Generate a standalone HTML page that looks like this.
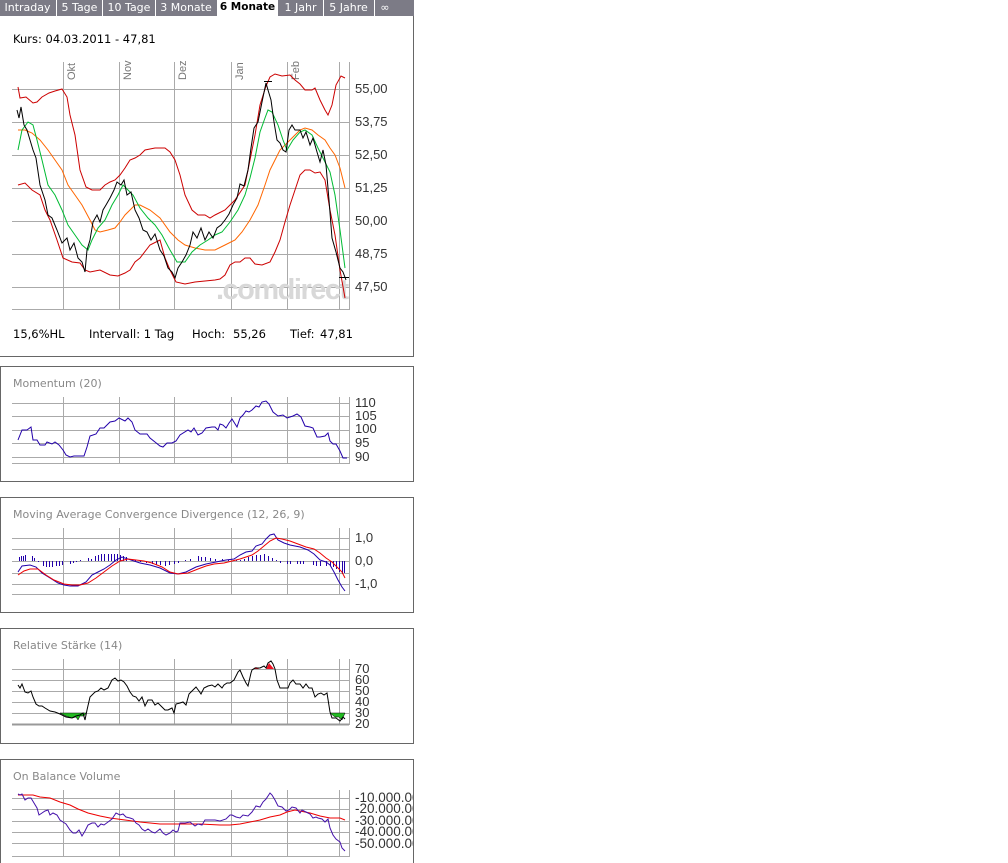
<!DOCTYPE html>
<html><head><meta charset="utf-8"><style>
body{margin:0;background:#fff;width:1008px;height:863px;overflow:hidden;font-family:"DejaVu Sans","Liberation Sans",sans-serif}
.tabs{position:absolute;left:0;top:0;width:414px;height:16px;background:#7c7b86}
.tab{position:absolute;top:0;height:15px;line-height:15px;font-size:11px;color:#fff;text-align:center;white-space:nowrap;overflow:hidden}
.sep{position:absolute;top:0;width:1px;height:16px;background:#fff}
.act{background:#fff;color:#000;font-weight:bold;height:17px;font-size:10.5px}
svg{position:absolute;left:0;top:0}
</style></head><body>
<div class="tabs">
<div class="tab" style="left:0;width:55px">Intraday</div><div class="sep" style="left:56px"></div>
<div class="tab" style="left:57px;width:45px">5 Tage</div><div class="sep" style="left:102px"></div>
<div class="tab" style="left:103px;width:52px">10 Tage</div><div class="sep" style="left:155px"></div>
<div class="tab" style="left:156px;width:60px">3 Monate</div>
<div class="tab act" style="left:217px;width:61px">6 Monate</div>
<div class="tab" style="left:279px;width:43px">1 Jahr</div><div class="sep" style="left:323px"></div>
<div class="tab" style="left:324px;width:49px">5 Jahre</div><div class="sep" style="left:374px"></div>
<div class="tab" style="left:375px;width:20px">∞</div>
</div>
<svg width="1008" height="863" font-family="Liberation Sans, sans-serif">
<defs><clipPath id="c"><rect x="0" y="0" width="413" height="863"/></clipPath></defs>
<g fill="none" stroke="#666" stroke-width="1">
<path d="M413.5 16V356.5H0"/>
<rect x="0.5" y="366.5" width="413" height="115"/>
<rect x="0.5" y="497.5" width="413" height="115"/>
<rect x="0.5" y="628.5" width="413" height="115"/>
<rect x="0.5" y="759.5" width="413" height="110"/>
</g>
<text x="13" y="43" font-size="11.5" font-family="DejaVu Sans,sans-serif" fill="#000">Kurs: 04.03.2011 - 47,81</text>
<g stroke="#aaa" stroke-width="1">
<path d="M12 89.5H349M12 122.5H349M12 155.5H349M12 188.5H349M12 221.5H349M12 254.5H349M12 287.5H349M12 309.5H349"/>
<path d="M63.5 62V310M119.5 62V310M174.5 62V310M231.5 62V310M287.5 62V310M339.5 62V310M349.5 62V310"/>
</g>
<g font-size="11" fill="#777" font-family="Liberation Sans,sans-serif">
<text transform="translate(75,80) rotate(-90)">Okt</text>
<text transform="translate(131,80) rotate(-90)">Nov</text>
<text transform="translate(186,80) rotate(-90)">Dez</text>
<text transform="translate(243,80) rotate(-90)">Jan</text>
<text transform="translate(299,80) rotate(-90)">Feb</text>
</g>
<text x="216" y="299" font-size="29" font-weight="bold" fill="#d8d8d8" font-family="Liberation Sans,sans-serif" letter-spacing="-1.5">.comdirect</text>
<g font-size="13" fill="#333">
<text x="355" y="93">55,00</text><text x="355" y="126">53,75</text><text x="355" y="159">52,50</text><text x="355" y="192">51,25</text><text x="355" y="225">50,00</text><text x="355" y="258">48,75</text><text x="355" y="291">47,50</text>
</g>
<g fill="none" stroke-width="1">
<polyline stroke="#cc0000" points="18,87 20,98 26,97 33,103 37,102 42,97 49,93 55,91 62,89 67,97 70,115 75,135 80,170 86,187 92,190 100,190 105,185 110,182 115,180 120,175 125,168 130,160 135,158 140,155 145,150 155,148 165,148 170,152 175,160 180,175 185,195 192,210 198,215 205,215 210,218 215,215 225,210 235,200 245,185 250,160 255,135 260,105 266,86 270,77 275,74 282,76 290,75 295,80 300,84 305,90 312,90 315,88 320,100 325,110 328,115 332,105 336,85 341,76 345,78"/>
<polyline stroke="#cc0000" points="18,185 25,183 32,190 40,195 45,210 50,220 57,240 63,258 72,262 80,263 85,270 90,272 100,270 110,275 118,276 125,273 130,270 135,262 140,258 150,245 160,240 165,258 170,270 176,282 185,284 195,282 205,281 215,280 220,279 225,275 230,265 235,262 240,262 245,258 250,258 255,264 262,265 270,262 275,252 280,240 285,222 290,205 295,190 300,175 305,170 310,170 315,173 320,172 325,180 330,210 335,235 340,270 345,298"/>
<polyline stroke="#ff6600" points="18,130 25,130 32,133 40,140 48,150 55,160 62,170 68,185 75,195 82,205 90,220 95,230 100,232 108,230 115,228 120,222 125,215 130,210 135,205 140,205 150,210 160,218 170,232 178,240 185,245 195,248 205,250 215,250 225,245 235,240 242,232 250,220 258,205 265,185 270,170 275,160 280,150 287,143 295,135 300,130 305,128 312,130 318,135 325,140 330,148 335,155 340,168 345,188"/>
<polyline stroke="#00bb33" points="18,150 22,130 28,122 33,125 37,140 42,160 48,185 55,195 62,210 68,225 75,235 82,245 88,250 92,240 98,228 105,220 112,205 118,195 123,185 128,190 133,195 140,208 148,218 155,225 162,235 170,250 177,262 185,262 192,252 200,245 208,240 215,235 222,232 230,222 238,210 245,195 250,178 255,158 260,132 265,118 268,110 272,112 278,125 283,140 287,150 293,140 300,132 305,130 312,135 318,148 324,160 330,172 335,195 340,230 345,268"/>
<polyline stroke="#000" points="17,110 19,118 21,107 24,125 27,130 30,140 33,150 36,158 40,185 45,200 48,215 52,218 57,230 62,243 67,238 70,250 74,243 78,258 82,262 85,272 87,250 90,240 93,222 97,215 100,222 103,210 106,205 110,198 114,190 117,182 121,185 124,180 127,195 131,192 135,210 139,218 143,230 147,232 151,240 155,234 160,250 164,256 168,268 172,272 175,278 178,268 182,262 186,255 190,245 193,232 197,238 201,228 205,240 209,232 213,238 217,228 221,225 225,220 229,214 233,205 237,198 240,184 244,186 248,170 251,148 254,128 258,122 262,102 266,83 268,90 271,100 274,122 277,140 280,143 283,150 286,152 289,130 292,125 295,130 300,130 303,138 306,132 310,145 313,138 317,152 320,162 323,150 326,165 329,200 332,238 336,252 340,268 343,272 346,280"/>
<path stroke="#000" d="M264 81.5H272M339 277.5H349"/>
</g>
<g font-size="11.5" font-family="DejaVu Sans,sans-serif" fill="#000">
<text x="13" y="338">15,6%HL</text><text x="89" y="338">Intervall: 1 Tag</text><text x="192" y="338">Hoch:</text><text x="233" y="338">55,26</text><text x="290" y="338">Tief:</text><text x="320" y="338">47,81</text>
</g>
<text x="13" y="387" font-size="11" fill="#888" font-family="DejaVu Sans,sans-serif">Momentum (20)</text>
<g stroke="#aaa"><path d="M12 403.5H349M12 416.5H349M12 430.5H349M12 443.5H349M12 457.5H349M12 463.5H349"/><path d="M63.5 397V464M119.5 397V464M174.5 397V464M231.5 397V464M287.5 397V464M339.5 397V464M349.5 397V464"/></g>
<g font-size="13" fill="#333"><text x="355" y="407">110</text><text x="355" y="420">105</text><text x="355" y="433">100</text><text x="355" y="447">95</text><text x="355" y="461">90</text></g>
<polyline fill="none" stroke="#2200aa" points="18,440 22,430 27,430 31,427 33,440 37,440 40,445 45,445 47,442 52,444 55,442 59,445 63,450 66,455 70,457 74,456 79,456 84,456 87,447 90,436 96,434 100,428 104,428 110,422 115,421 119,418 125,421 128,418 132,422 135,430 140,434 147,434 150,438 155,442 160,446 163,447 167,443 172,443 176,441 180,435 188,430 191,432 194,428 198,435 202,433 206,428 212,427 215,427 218,430 220,424 223,425 226,428 229,423 232,419 237,427 240,418 243,415 246,411 249,412 252,410 256,406 259,407 262,402 266,401 269,404 273,412 278,416 283,415 287,418 290,417 293,416 297,414 301,417 305,426 310,427 313,428 317,437 320,437 325,436 328,433 330,441 333,444 336,444 340,451 343,458 347,458"/>
<text x="13" y="518" font-size="11" fill="#888" font-family="DejaVu Sans,sans-serif">Moving Average Convergence Divergence (12, 26, 9)</text>
<g stroke="#aaa"><path d="M12 538.5H349M12 549.5H349M12 561.5H349M12 573.5H349M12 584.5H349M12 594.5H349"/><path d="M63.5 528V595M119.5 528V595M174.5 528V595M231.5 528V595M287.5 528V595M339.5 528V595M349.5 528V595"/></g>
<g font-size="13" fill="#333"><text x="355" y="542">1,0</text><text x="355" y="565">0,0</text><text x="355" y="588">-1,0</text></g>
<path stroke="#2200aa" stroke-width="1" fill="none" transform="translate(0.5,0)" d="M19 561v-4M21 561v-5M23 561v-5M25 561v-6M32 561v-5M34 561v-3M38 561v1M43 561v5M46 561v6M49 561v6M52 561v6M56 561v5M59 561v5M62 561v4M70 561v3M73 561v2M76 561v1M80 561v-1M88 561v-3M91 561v-2M95 561v-5M98 561v-6M101 561v-7M104 561v-7M108 561v-7M111 561v-7M114 561v-7M117 561v-7M120 561v-6M123 561v-5M126 561v-4M135 561v-1M140 561v1M146 561v2M152 561v3M156 561v4M160 561v4M165 561v5M169 561v4M174 561v3M178 561v2M185 561v-1M190 561v-2M198 561v-5M201 561v-4M205 561v-4M210 561v-3M215 561v-2M222 561v-2M228 561v-1M236 561v-1M240 561v-1M244 561v-2M248 561v-4M252 561v-5M256 561v-6M260 561v-6M264 561v-7M268 561v-5M272 561v-3M276 561v-1M280 561v2M287 561v3M290 561v3M297 561v3M300 561v3M303 561v3M313 561v4M316 561v5M320 561v5M326 561v5M330 561v5M333 561v6M336 561v8M339 561v11M342 561v13M344 561v12"/>
<polyline fill="none" stroke="#2200aa" points="18,572 22,566 30,565 36,567 42,573 50,578 58,583 64,585 70,586 78,586 86,582 92,575 98,572 104,569 110,565 116,560 122,557 128,559 134,561 140,563 150,565 160,568 170,573 178,574 186,572 196,567 206,564 216,562 226,560 234,559 240,555 246,552 252,551 256,546 262,544 266,539 270,535 274,534 278,540 284,543 290,545 300,547 308,550 314,554 320,560 326,562 330,565 334,572 338,580 342,587 345,591"/>
<polyline fill="none" stroke="#ee0000" points="18,575 24,571 30,569 38,569 46,575 54,580 64,584 72,585 80,585 88,583 96,578 104,572 112,566 120,561 128,559 136,560 144,561 152,563 162,567 170,572 178,574 188,573 198,569 206,566 214,564 224,563 232,561 240,559 246,557 252,555 258,551 264,546 270,541 276,538 282,539 290,541 298,544 306,547 314,549 320,553 326,558 332,562 337,567 342,572 345,578"/>
<text x="13" y="649" font-size="11" fill="#888" font-family="DejaVu Sans,sans-serif">Relative Stärke (14)</text>
<g stroke="#aaa"><path d="M12 669.5H349M12 680.5H349M12 691.5H349M12 702.5H349M12 713.5H349M12 724.5H349"/><path d="M63.5 659V725M119.5 659V725M174.5 659V725M231.5 659V725M287.5 659V725M339.5 659V725M349.5 659V725"/></g>
<path d="M12 724.5H349" stroke="#999" stroke-width="2"/>
<g font-size="13" fill="#333"><text x="355" y="673">70</text><text x="355" y="684">60</text><text x="355" y="695">50</text><text x="355" y="706">40</text><text x="355" y="717">30</text><text x="355" y="728">20</text></g>
<path fill="#22bb22" stroke="#000" stroke-width="0.5" d="M60 713L66 716L72 718L76 717L78 720L80 716L84 716L86 713ZM330 713L335 717L339 717L342 720L345 713Z"/>
<path fill="#ee1122" d="M253 669L256 667L259 669ZM266 669L269 663L274 669Z"/>
<polyline fill="none" stroke="#000" points="18,685 20,688 22,684 25,692 28,693 31,691 33,697 36,704 39,706 42,706 45,708 50,711 55,712 60,714 66,717 72,718 76,716 80,715 83,713 85,720 87,710 90,697 95,692 98,691 101,688 104,690 108,688 112,680 115,678 118,681 121,680 124,682 127,686 130,692 133,696 136,697 139,701 142,697 145,706 148,700 152,700 155,705 158,703 162,707 165,710 168,710 172,708 174,713 176,704 180,703 183,702 186,705 189,694 193,690 196,687 199,691 201,694 204,688 208,686 212,685 215,687 218,684 222,688 224,685 227,683 230,683 234,680 238,672 240,670 243,677 246,683 248,686 251,673 252,670 255,668 260,668 264,666 266,668 268,663 271,661 273,664 275,669 277,680 280,688 284,688 288,688 290,683 293,680 296,684 300,684 303,688 306,684 309,688 312,688 315,697 318,694 321,693 324,695 327,693 330,712 332,718 336,718 340,721 343,717 345,719"/>
<text x="13" y="780" font-size="11" fill="#888" font-family="DejaVu Sans,sans-serif">On Balance Volume</text>
<g stroke="#aaa"><path d="M12 798.5H349M12 809.5H349M12 821.5H349M12 832.5H349M12 843.5H349M12 856.5H349"/><path d="M63.5 790V857M119.5 790V857M174.5 790V857M231.5 790V857M287.5 790V857M339.5 790V857M349.5 790V857"/></g>
<g font-size="13.5" fill="#333" clip-path="url(#c)"><text x="355" y="802">-10.000.000</text><text x="355" y="813">-20.000.000</text><text x="355" y="825">-30.000.000</text><text x="355" y="836">-40.000.000</text><text x="355" y="848">-50.000.000</text></g>
<polyline fill="none" stroke="#ee0000" points="18,795 33,795 40,797 50,798 60,802 70,805 78,809 88,813 100,816 110,818 125,820 140,822 160,824 180,824 200,824 220,825 230,825 240,824 250,822 260,820 270,817 280,815 287,812 295,810 310,813 320,816 330,818 340,818 345,820"/>
<polyline fill="none" stroke="#4411aa" points="18,794 20,795 22,794 25,800 28,798 31,798 34,803 37,808 39,815 42,813 45,811 48,810 50,815 53,813 57,815 60,820 63,822 66,824 70,830 73,833 76,833 79,830 82,836 85,831 88,825 92,823 95,823 98,827 101,824 104,825 108,822 112,819 116,813 120,815 123,814 126,817 130,818 133,819 136,823 139,825 142,829 145,831 148,829 152,832 155,833 160,829 163,833 166,835 170,833 173,830 176,832 178,831 180,823 185,823 190,822 195,826 198,824 202,825 205,820 210,820 215,820 220,821 226,819 230,815 232,815 236,817 240,818 243,815 248,816 252,812 256,806 260,807 263,802 266,799 270,793 272,795 275,800 278,806 282,807 286,811 289,810 292,807 296,808 300,813 302,810 306,812 310,814 313,818 316,817 318,818 322,819 325,822 328,819 330,828 333,835 336,839 340,842 342,848 345,851"/>
</svg>
</body></html>
